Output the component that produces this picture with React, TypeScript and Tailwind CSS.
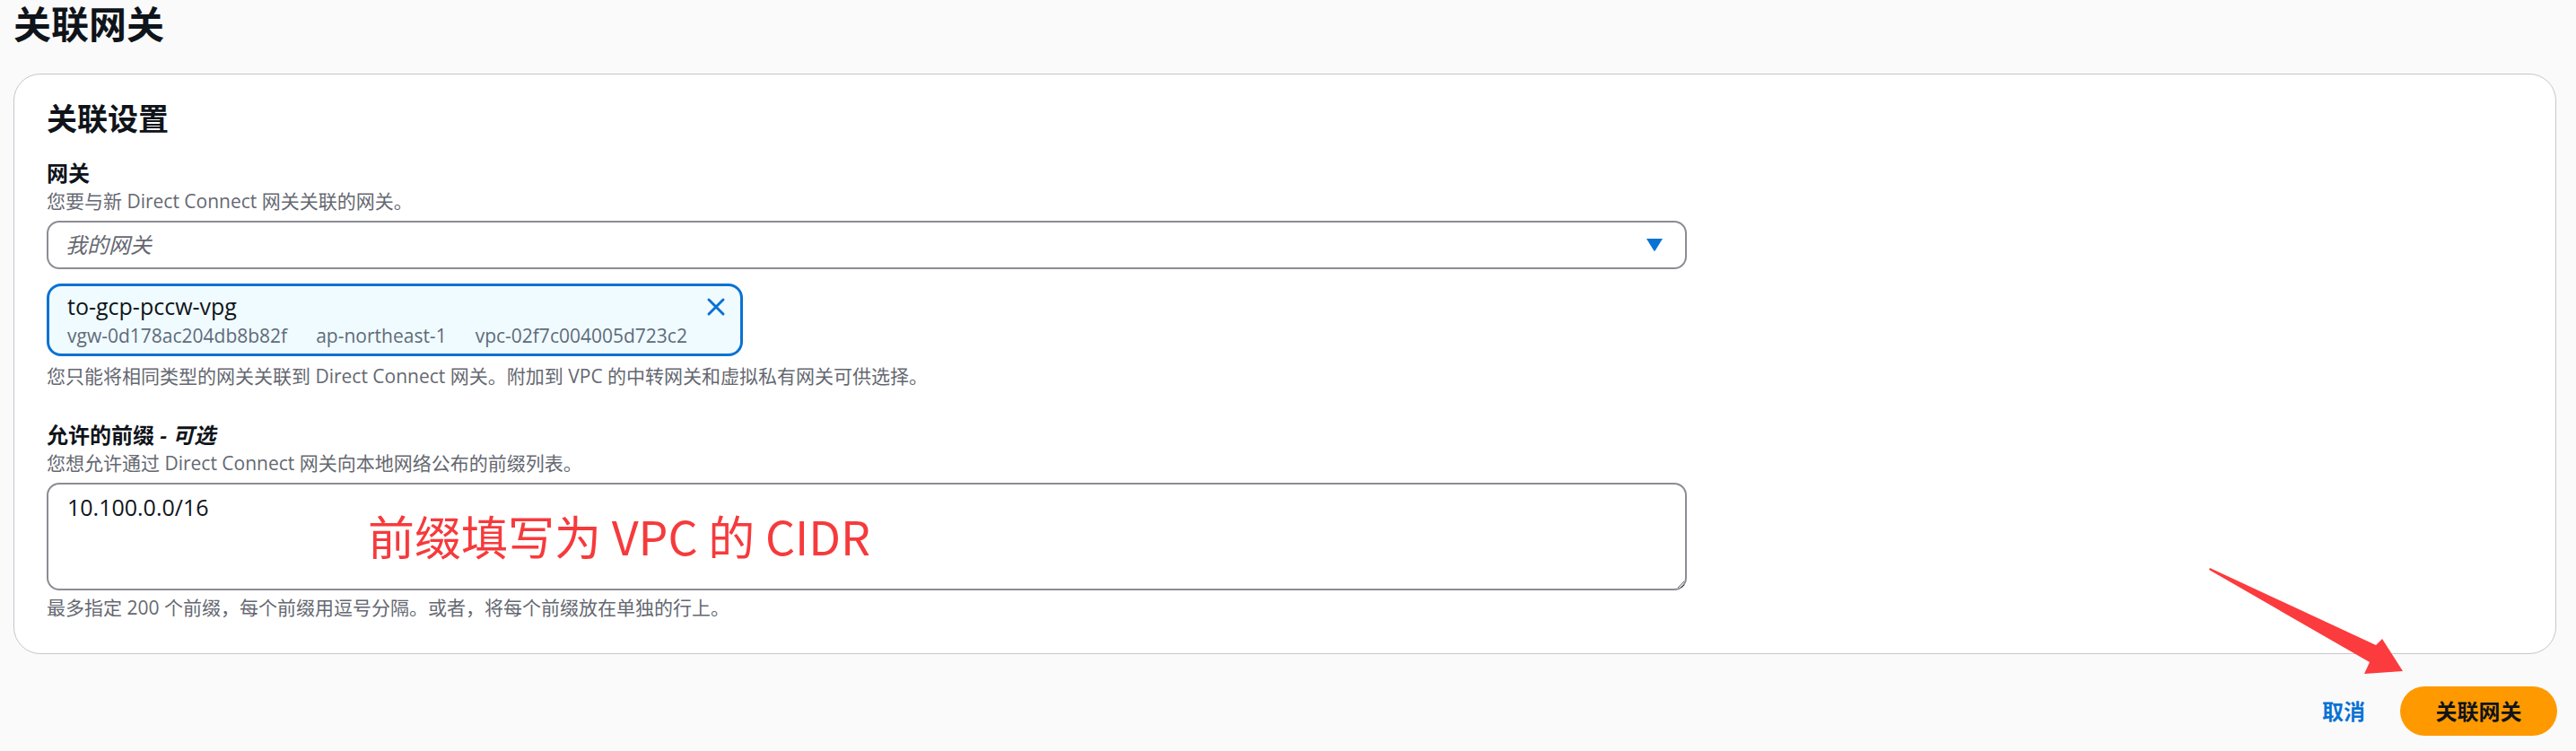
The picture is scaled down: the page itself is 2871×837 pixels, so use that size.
import React from "react";

const App = () => {
  return (
    <div className="relative min-h-screen w-full bg-[#fafafa] font-['Open_Sans','Noto_Sans_CJK_SC',sans-serif] text-[#0f141a]">
      {/* Page title */}
      <h1 className="pl-[15px] text-[42px] font-bold leading-[54px] mb-[28px]">关联网关</h1>

      {/* Settings card */}
      <div className="ml-[15px] mr-[22px] rounded-[30px] border border-[#c6c6cd] bg-white px-[36px] pt-[29px] pb-[37px]">
        <h2 className="text-[34px] font-bold leading-[40px]">关联设置</h2>

        <div className="mt-[26px] text-[24px] font-bold leading-[30px]">网关</div>
        <div className="mt-[2px] text-[21px] leading-[28px] text-[#656871]">
          您要与新 Direct Connect 网关关联的网关。
        </div>

        {/* Select */}
        <div className="mt-[8px] flex h-[54px] w-[1828px] items-center justify-between rounded-[14px] border-2 border-[#8c8c94] bg-white pl-[19px] pr-[24px]">
          <span className="text-[24px] italic text-[#656871]">我的网关</span>
          <svg width="20" height="16" viewBox="0 0 20 16">
            <path d="M1 1 H19 L10.8 14.2 Q10 15.2 9.2 14.2 Z" fill="#0972d3" />
          </svg>
        </div>

        {/* Selected token */}
        <div className="mt-[16px] flex h-[81px] w-[776px] items-start justify-between rounded-[16px] border-[3px] border-[#0972d3] bg-[#f0fbff] pl-[20px] pr-[16px] pt-[5px]">
          <div className="flex flex-col">
            <span className="text-[25px] leading-[34px]">to-gcp-pccw-vpg</span>
            <div className="mt-[2px] flex gap-[32px] text-[21px] leading-[28px] text-[#5f6b7a]">
              <span>vgw-0d178ac204db8b82f</span>
              <span>ap-northeast-1</span>
              <span>vpc-02f7c004005d723c2</span>
            </div>
          </div>
          <svg className="mt-[7px]" width="22" height="22" viewBox="0 0 22 22">
            <path d="M3 3 L19 19 M19 3 L3 19" stroke="#0972d3" strokeWidth="3" strokeLinecap="round" />
          </svg>
        </div>

        <div className="mt-[8px] text-[21px] leading-[28px] text-[#656871]">
          您只能将相同类型的网关关联到 Direct Connect 网关。附加到 VPC 的中转网关和虚拟私有网关可供选择。
        </div>

        <div className="mt-[37px] text-[24px] font-bold leading-[30px]">
          允许的前缀 <i>- 可选</i>
        </div>
        <div className="mt-[2px] text-[21px] leading-[28px] text-[#656871]">
          您想允许通过 Direct Connect 网关向本地网络公布的前缀列表。
        </div>

        {/* Prefix textarea with annotation */}
        <div className="relative mt-[8px] w-[1828px]">
          <textarea
            readOnly
            defaultValue="10.100.0.0/16"
            className="block h-[120px] w-full resize-y rounded-[14px] border-2 border-[#8c8c94] bg-white pl-[21px] pt-[8px] text-[25px] leading-[34px] text-[#0f141a] outline-none"
          />
          <span className="pointer-events-none absolute left-[358px] top-[29px] whitespace-nowrap font-['Noto_Sans_CJK_SC',sans-serif] text-[52px] leading-[60px] text-[#f63a3c]">
            前缀填写为 VPC 的 CIDR
          </span>
        </div>

        <div className="mt-[5px] text-[21px] leading-[28px] text-[#656871]">
          最多指定 200 个前缀，每个前缀用逗号分隔。或者，将每个前缀放在单独的行上。
        </div>
      </div>

      {/* Actions */}
      <div className="mt-[36px] flex items-center justify-end gap-[39px] pr-[21px]">
        <button className="text-[24px] font-bold text-[#0972d3]">取消</button>
        <button className="h-[55px] w-[175px] rounded-full bg-[#ff9900] text-[24px] font-bold text-[#0f141a]">
          关联网关
        </button>
      </div>

      {/* Red annotation arrow */}
      <svg className="pointer-events-none absolute left-[2450px] top-[620px]" width="240" height="140" viewBox="0 0 240 140">
        <polygon points="13,13 198,99 205,92 228,128 185,131 191,118 12,15" fill="#fb3b3d" />
      </svg>
    </div>
  );
};

export default App;
